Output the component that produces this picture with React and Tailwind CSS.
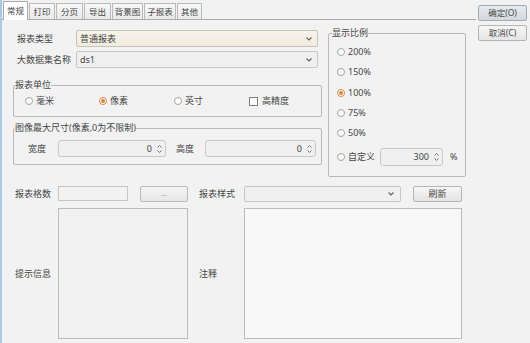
const Chevron = () => (
  <svg width="8" height="6" viewBox="0 0 8 6" className="shrink-0">
    <path d="M1.5 1.5 L4 4 L6.5 1.5" fill="none" stroke="#666" strokeWidth="1.2" />
  </svg>
);

const Spin = () => (
  <svg width="7" height="12" viewBox="0 0 7 12" className="shrink-0">
    <path d="M1.5 4.5 L3.5 2.5 L5.5 4.5" fill="none" stroke="#777" strokeWidth="1" />
    <path d="M1.5 7.5 L3.5 9.5 L5.5 7.5" fill="none" stroke="#777" strokeWidth="1" />
  </svg>
);

function Radio({ checked, label }) {
  return (
    <div className="flex items-center gap-[3px]">
      {checked ? (
        <span className="w-[8px] h-[8px] rounded-full border border-[#c98a52] bg-white flex items-center justify-center">
          <span className="w-[4px] h-[4px] rounded-full bg-[#e08238]" />
        </span>
      ) : (
        <span className="w-[8px] h-[8px] rounded-full border border-[#a4a4a4] bg-white" />
      )}
      <span>{label}</span>
    </div>
  );
}

function Select({ value, className }) {
  return (
    <div className={className}>
      <span className="flex-1 truncate">{value}</span>
      <Chevron />
    </div>
  );
}

function SpinBox({ value, className }) {
  return (
    <div className={className}>
      <span className="flex-1 text-right pr-[4px]">{value}</span>
      <Spin />
    </div>
  );
}

const tabs = [
  { t: "常规", w: "w-[25px]", sel: true },
  { t: "打印", w: "w-[26px]" },
  { t: "分页", w: "w-[27px]" },
  { t: "导出", w: "w-[27px]" },
  { t: "背景图", w: "w-[31px]" },
  { t: "子报表", w: "w-[32px]" },
  { t: "其他", w: "w-[25px]" },
];

export default function App() {
  return (
    <div className="w-[530px] h-[343px] bg-[#f1f2f1] flex text-[9px] leading-[12px] text-[#474747] overflow-hidden border-l-2 border-[#a9c9e6] font-['Noto_Sans','Noto_Sans_CJK_SC',sans-serif]">
      <div className="w-[474px] flex flex-col">
        {/* tabs */}
        <div className="h-[20px] flex items-end gap-[1px] pl-[1px] border-b border-[#aaaaaa] shrink-0">
          {tabs.map((tab) =>
            tab.sel ? (
              <div
                key={tab.t}
                className={`${tab.w} h-[19px] -mb-px bg-white border border-b-0 border-[#aaaaaa] flex items-center justify-center text-[8.5px]`}
              >
                {tab.t}
              </div>
            ) : (
              <div
                key={tab.t}
                className={`${tab.w} h-[16px] bg-gradient-to-b from-[#f7f7f7] to-[#e8e9e8] border border-b-0 border-[#bababa] flex items-center justify-center text-[8.5px]`}
              >
                {tab.t}
              </div>
            )
          )}
        </div>

        {/* top section */}
        <div className="flex items-start pl-[11px]">
          <div className="w-[309px] flex flex-col mt-[10px]">
            <div className="flex items-center h-[17px]">
              <span className="w-[63px] pl-[4px]">报表类型</span>
              <Select
                value="普通报表"
                className="w-[242px] h-[17px] rounded-[2px] border border-[#c6c3bc] bg-gradient-to-b from-[#f8f4ea] to-[#f1ebdf] flex items-center pl-[3px] pr-[4px]"
              />
            </div>
            <div className="flex items-center h-[17px] mt-[4px]">
              <span className="w-[63px] pl-[4px]">大数据集名称</span>
              <Select
                value="ds1"
                className="w-[242px] h-[17px] rounded-[2px] border border-[#c8c8c8] bg-[#eff0ef] flex items-center pl-[3px] pr-[4px]"
              />
            </div>

            <fieldset className="mt-[11px] h-[38px] border border-[#b8b8b8] rounded-[2px] px-[1px]">
              <legend className="px-0 leading-[12px]">报表单位</legend>
              <div className="flex items-center h-[20px] pl-[10px]">
                <div className="w-[74px]"><Radio label="毫米" /></div>
                <div className="w-[75px]"><Radio checked label="像素" /></div>
                <div className="w-[75px]"><Radio label="英寸" /></div>
                <div className="flex items-center gap-[4px]">
                  <span className="w-[9px] h-[9px] border border-[#808080] bg-white" />
                  <span>高精度</span>
                </div>
              </div>
            </fieldset>

            <fieldset className="mt-[5px] h-[43px] border border-[#b8b8b8] rounded-[2px] px-[1px]">
              <legend className="px-0 leading-[12px]">图像最大尺寸(像素,0为不限制)</legend>
              <div className="flex items-center h-[17px] mt-[6px]">
                <span className="w-[43px] pl-[13px]">宽度</span>
                <SpinBox
                  value="0"
                  className="w-[108px] h-[17px] rounded-[3px] border border-[#c8c8c8] bg-[#eff0ef] flex items-center pr-[2px]"
                />
                <span className="w-[39px] pl-[10px]">高度</span>
                <SpinBox
                  value="0"
                  className="w-[111px] h-[17px] rounded-[3px] border border-[#c8c8c8] bg-[#eff0ef] flex items-center pr-[2px]"
                />
              </div>
            </fieldset>
          </div>

          <fieldset className="ml-[6px] mt-[7px] w-[138px] h-[150px] border border-[#b8b8b8] rounded-[2px] px-[3px]">
            <legend className="px-0 leading-[12px]">显示比例</legend>
            <div className="flex flex-col pl-[5px] pt-[3px]">
              <div className="h-[20px] flex items-center"><Radio label="200%" /></div>
              <div className="h-[20px] flex items-center"><Radio label="150%" /></div>
              <div className="h-[21px] flex items-center"><Radio checked label="100%" /></div>
              <div className="h-[20px] flex items-center"><Radio label="75%" /></div>
              <div className="h-[20px] flex items-center"><Radio label="50%" /></div>
              <div className="h-[18px] mt-[5px] flex items-center">
                <div className="w-[43px]"><Radio label="自定义" /></div>
                <SpinBox
                  value="300"
                  className="w-[63px] h-[18px] rounded-[3px] border border-[#c8c8c8] bg-[#eff0ef] flex items-center pr-[2px]"
                />
                <span className="ml-[7px]">%</span>
              </div>
            </div>
          </fieldset>
        </div>

        {/* bottom section */}
        <div className="pl-[13px] mt-[9px] flex flex-col">
          <div className="flex items-center h-[16px]">
            <span className="w-[43px]">报表格数</span>
            <div className="w-[70px] h-[15px] border border-[#c6c6c6] bg-[#f1f2f1] self-start" />
            <div className="ml-[12px] w-[48px] h-[16px] border border-[#bcbcbc] rounded-[2px] bg-gradient-to-b from-[#f5f5f5] to-[#e6e6e6] flex items-center justify-center text-[#999] text-[7px]">
              ...
            </div>
            <span className="ml-[11px] w-[45px]">报表样式</span>
            <Select
              value=""
              className="w-[157px] h-[16px] rounded-[2px] border border-[#c6c6c6] bg-[#eff0ef] flex items-center pl-[3px] pr-[5px]"
            />
            <div className="ml-[12px] w-[49px] h-[16px] border border-[#b4b4b4] rounded-[2px] bg-gradient-to-b from-[#f6f6f6] to-[#e4e4e4] flex items-center justify-center">
              刷新
            </div>
          </div>
          <div className="flex items-center mt-[6px] h-[131px]">
            <span className="w-[43px]">提示信息</span>
            <div className="w-[130px] h-[131px] border border-[#bcbcbc] bg-[#f0f1f0]" />
            <span className="ml-[11px] w-[45px]">注释</span>
            <div className="w-[218px] h-[131px] border border-[#bcbcbc] bg-[#f7f8f7]" />
          </div>
        </div>
      </div>

      {/* side buttons */}
      <div className="ml-[2px] mt-[5px] flex flex-col gap-[4px]">
        <div className="w-[49px] h-[16px] border border-[#a2abb5] rounded-[2px] bg-gradient-to-b from-[#e6e9ee] to-[#d3d8df] flex items-center justify-center text-[8.5px]">
          确定(O)
        </div>
        <div className="w-[49px] h-[16px] border border-[#b4b4b4] rounded-[2px] bg-gradient-to-b from-[#f6f6f6] to-[#e5e5e5] flex items-center justify-center text-[8.5px]">
          取消(C)
        </div>
      </div>
    </div>
  );
}
